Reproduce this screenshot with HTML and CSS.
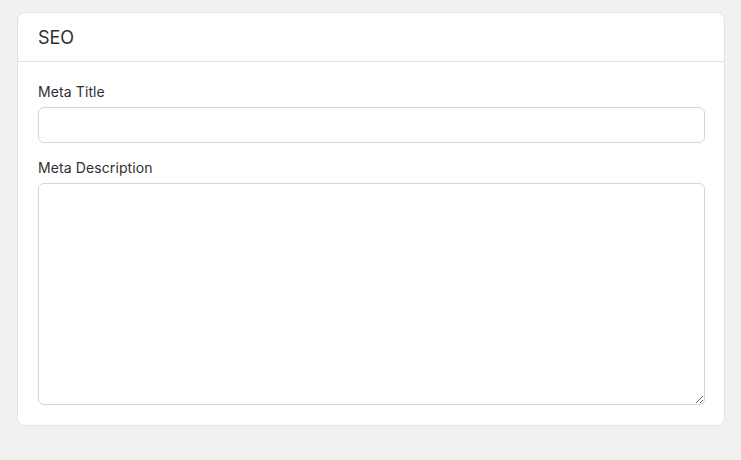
FILE: index.html
```html
<!DOCTYPE html>
<html lang="en">

<head>
    <meta charset="UTF-8">
    <meta name="viewport" content="width=device-width, initial-scale=1.0">
    <title>SEO</title>

    <link rel="stylesheet" href="styles.css">
</head>

<body>
    <div class="card">
        <div class="card-header">
            <h2>SEO</h2>
        </div>
        <div class="card-body">
            <div class="field">
                <label for="meta-title">Meta Title</label>
                <input type="text" id="meta-title" class="input">
            </div>
            <div class="field">
                <label for="meta-description">Meta Description</label>
                <textarea id="meta-description" class="input textarea"></textarea>
            </div>
        </div>
    </div>
</body>

</html>
```

FILE: styles.css
```css
* {
    margin: 0;
    padding: 0;
    box-sizing: border-box
}

body {
    background: #f1f1f1;
    font-family: Inter, "Liberation Sans", sans-serif;
    color: #303030;
    padding: 12px 16px 0 17px;
}

.card {
    background: #fff;
    border: 1px solid #e3e3e3;
    border-radius: 8px;
}

.card-header {
    height: 49px;
    padding: 0 20px;
    display: flex;
    align-items: center;
    border-bottom: 1px solid #e3e3e3;
}

.card-header h2 {
    font-size: 18px;
    font-weight: 400;
    color: #303030;
}

.card-body {
    padding: 20px 19px 20px 20px;
    display: flex;
    flex-direction: column;
    gap: 15px;
}

.field {
    display: flex;
    flex-direction: column;
    gap: 5px;
}

.field label {
    font-size: 14px;
    line-height: 20px;
    letter-spacing: 0.1px;
}

.input {
    display: block;
    width: 100%;
    height: 36px;
    border: 1px solid #d6d6d6;
    border-radius: 6px;
    font: inherit;
    font-size: 14px;
    padding: 0 12px;
    outline: none;
}

.textarea {
    height: 222px;
    padding: 8px 12px;
    resize: vertical;
}
```
